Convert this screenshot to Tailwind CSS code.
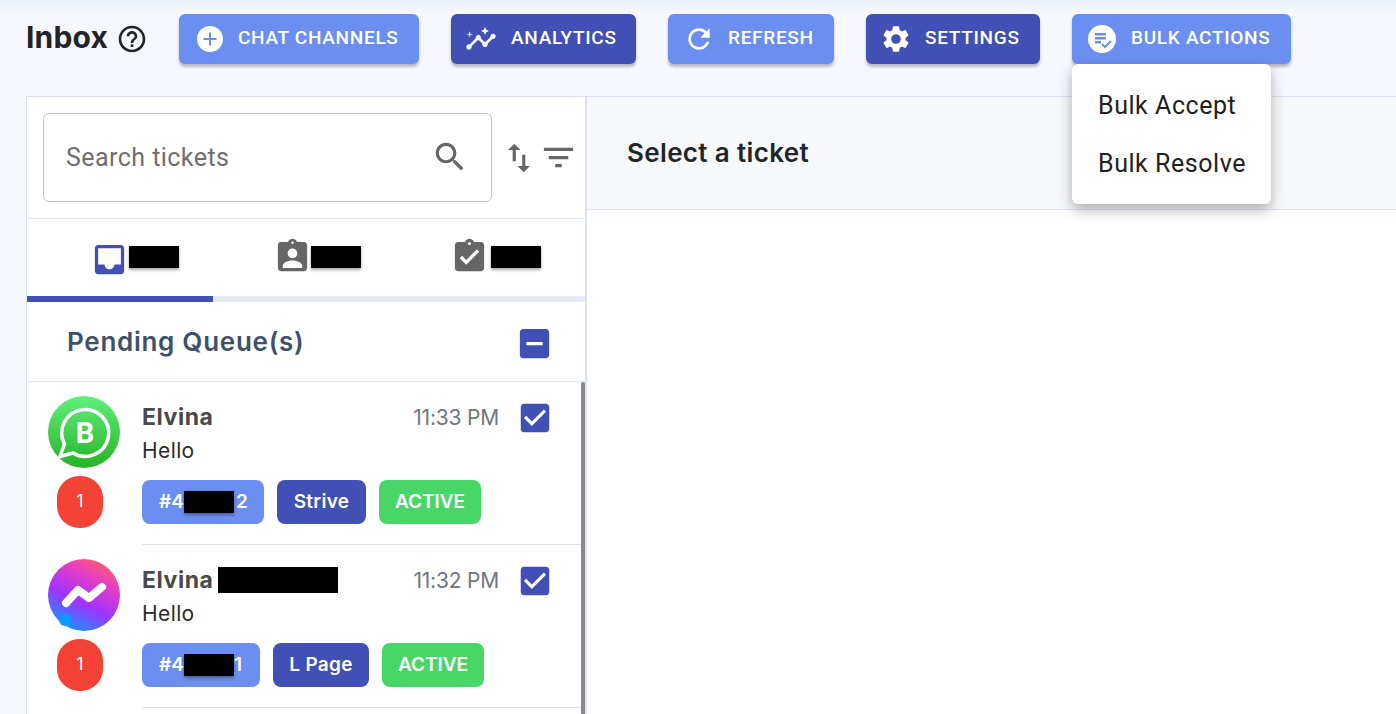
<!DOCTYPE html>
<html>
<head>
  <meta charset="utf-8">
  <title>Inbox</title>
  <script src="https://cdn.jsdelivr.net/npm/@tailwindcss/browser@4"></script>
</head>
<body class="bg-[#f6f8fe] h-[714px] overflow-hidden font-['Roboto',sans-serif]">

<!-- top bar -->
<header class="relative z-10 h-24 flex items-start pt-[14px] pl-[26px] bg-linear-to-b from-[#ebf1fd] to-[#f6f8fe] to-15%">
  <div class="w-[153px] h-[50px] flex items-center shrink-0">
    <h1 class="font-['Inter',sans-serif] font-bold text-[30px] text-[#212529] tracking-[0.2px] -mt-[3px]">Inbox</h1>
    <svg class="w-8 h-8 ml-[8px] -mt-[1px] text-[#212529]" viewBox="0 0 24 24" fill="currentColor"><path d="M11 18h2v-2h-2v2zm1-16C6.48 2 2 6.48 2 12s4.48 10 10 10 10-4.48 10-10S17.52 2 12 2zm0 18c-4.41 0-8-3.59-8-8s3.59-8 8-8 8 3.59 8 8-3.59 8-8 8zm0-14c-2.21 0-4 1.79-4 4h2c0-1.1.9-2 2-2s2 .9 2 2c0 2-3 1.75-3 5h2c0-2.25 3-2.5 3-5 0-2.21-1.79-4-4-4z"/></svg>
  </div>
  <div class="flex gap-8 text-white font-medium text-[19px] tracking-[0.7px]">
    <button class="w-[240px] h-[50px] pl-[18px] flex items-center gap-[15px] rounded-md bg-[#6b8ff0] shadow-[0_3px_3px_rgba(0,0,0,0.25)]">
      <svg class="w-[26px] h-[26px]" viewBox="0 0 26 26"><circle cx="13" cy="13" r="13" fill="#fff"/><path d="M13 6.500v13M6.500 13h13" stroke="#6b8ff0" stroke-width="2"/></svg>
      <span class="-mt-px">CHAT CHANNELS</span>
    </button>
    <button class="w-[185px] h-[50px] pl-[14px] flex items-center gap-[14px] rounded-md bg-[#4150b5] shadow-[0_3px_3px_rgba(0,0,0,0.25)]">
      <svg class="w-8 h-8" viewBox="0 0 24 24" fill="#fff"><path d="M21 8c-1.45 0-2.26 1.44-1.93 2.51l-3.55 3.56c-.3-.09-.74-.09-1.04 0l-2.55-2.55C12.27 10.45 11.46 9 10 9c-1.45 0-2.27 1.44-1.93 2.52l-4.56 4.55C2.44 15.74 1 16.55 1 18c0 1.1.9 2 2 2 1.45 0 2.26-1.44 1.93-2.51l4.55-4.56c.3.09.74.09 1.04 0l2.55 2.55C12.73 16.55 13.54 18 15 18c1.45 0 2.27-1.44 1.93-2.52l3.56-3.55c1.07.33 2.51-.48 2.51-1.93 0-1.1-.9-2-2-2z"/><path d="M15 9l.94-2.07L18 6l-2.06-.93L15 3l-.92 2.07L12 6l2.08.93zM3.500 11 4 9l2-.5L4 8l-.5-2L3 8l-2 .5L3 9z"/></svg>
      <span class="-mt-px">ANALYTICS</span>
    </button>
    <button class="w-[166px] h-[50px] pl-[15px] flex items-center gap-[13px] rounded-md bg-[#6b8ff0] shadow-[0_3px_3px_rgba(0,0,0,0.25)]">
      <svg class="w-8 h-8" viewBox="0 0 24 24" fill="#fff"><path d="M17.65 6.35C16.2 4.9 14.21 4 12 4c-4.42 0-7.99 3.58-7.99 8s3.57 8 7.99 8c3.73 0 6.84-2.55 7.73-6h-2.08c-.82 2.33-3.04 4-5.65 4-3.31 0-6-2.69-6-6s2.69-6 6-6c1.66 0 3.14.69 4.22 1.78L13 11h7V4l-2.35 2.35z"/></svg>
      <span class="-mt-px">REFRESH</span>
    </button>
    <button class="w-[174px] h-[50px] pl-[14px] flex items-center gap-[13px] rounded-md bg-[#4150b5] shadow-[0_3px_3px_rgba(0,0,0,0.25)]">
      <svg class="w-8 h-8" viewBox="0 0 24 24" fill="#fff"><path d="M19.14 12.94c.04-.3.06-.61.06-.94 0-.32-.02-.64-.07-.94l2.03-1.58c.18-.14.23-.41.12-.61l-1.92-3.32c-.12-.22-.37-.29-.59-.22l-2.39.96c-.5-.38-1.03-.7-1.62-.94l-.36-2.54c-.04-.24-.24-.41-.48-.41h-3.84c-.24 0-.43.17-.47.41l-.36 2.54c-.59.24-1.13.57-1.62.94l-2.39-.96c-.22-.08-.47 0-.59.22L2.74 8.87c-.12.21-.08.47.12.61l2.03 1.58c-.05.3-.09.63-.09.94s.02.64.07.94l-2.03 1.58c-.18.14-.23.41-.12.61l1.92 3.32c.12.22.37.29.59.22l2.39-.96c.5.38 1.03.7 1.62.94l.36 2.54c.05.24.24.41.48.41h3.84c.24 0 .44-.17.47-.41l.36-2.54c.59-.24 1.13-.56 1.62-.94l2.39.96c.22.08.47 0 .59-.22l1.92-3.32c.12-.22.07-.47-.12-.61l-2.01-1.58zM12 15.6c-1.98 0-3.6-1.62-3.6-3.6s1.62-3.6 3.6-3.6 3.6 1.62 3.6 3.6-1.62 3.6-3.6 3.6z"/></svg>
      <span class="-mt-px">SETTINGS</span>
    </button>
    <div class="relative">
      <button class="w-[219px] h-[50px] pl-[16px] flex items-center gap-[15px] rounded-md bg-[#6b8ff0] shadow-[0_3px_3px_rgba(0,0,0,0.25)]">
        <svg class="w-7 h-7" viewBox="0 0 28 28"><circle cx="14" cy="14" r="14" fill="#fff"/><path d="M7 8h11v2.400H7zM7 12h11v2.400H7zM7 16h6v2.400H7z" fill="#6b8ff0"/><path d="M14 19l3 3 6-6" fill="none" stroke="#6b8ff0" stroke-width="2"/></svg>
        <span class="-mt-px">BULK ACTIONS</span>
      </button>
      <!-- bulk actions menu -->
      <div class="absolute left-0 top-[50px] w-[199px] h-[140px] py-[13px] bg-white rounded-md shadow-[0_6px_14px_rgba(0,0,0,0.3)] text-[#212121] text-[25px] font-normal tracking-[0.55px]">
        <div class="h-[58px] pl-[26px] flex items-center">Bulk Accept</div>
        <div class="h-[58px] pl-[26px] flex items-center">Bulk Resolve</div>
      </div>
    </div>
  </div>
</header>

<main class="flex h-[618px] ml-[26px]">
  <!-- ticket list -->
  <section class="w-[561px] shrink-0 bg-white border-l border-t border-r-2 border-[#d9e3f2] flex flex-col">
    <div class="h-[122px] shrink-0 flex items-center pl-4 border-b border-[#dde5f0]">
      <div class="w-[449px] h-[89px] -mt-[1px] border border-[#c4c4c4] rounded-md flex items-center justify-between pl-[22px] pr-[22px] text-[25px] text-[#6e6e6e] tracking-[0.45px]">
        <span class="mt-[2px]">Search tickets</span>
        <svg class="w-[38px] h-[38px] text-[#666]" viewBox="0 0 24 24" fill="currentColor"><path d="M15.5 14h-.79l-.28-.27C15.41 12.59 16 11.11 16 9.5 16 5.91 13.09 3 9.5 3S3 5.91 3 9.5 5.91 16 9.5 16c1.61 0 3.09-.59 4.23-1.57l.27.28v.79l5 4.99L20.49 19l-4.99-5zm-6 0C7.01 14 5 11.99 5 9.5S7.01 5 9.5 5 14 7.01 14 9.5 11.99 14 9.5 14z"/></svg>
      </div>
      <svg class="w-[38px] h-[38px] ml-2 text-[#666]" viewBox="0 0 24 24" fill="currentColor"><path d="M16 17.01V10h-2v7.01h-3L15 21l4-3.99h-3zM9 3 5 6.99h3V14h2V6.99h3L9 3z"/></svg>
      <svg class="w-[39px] h-[39px] ml-px text-[#666]" viewBox="0 0 24 24" fill="currentColor"><path d="M10 18h4v-2h-4v2zM3 6v2h18V6H3zm3 7h12v-2H6v2z"/></svg>
    </div>

    <!-- tabs -->
    <div class="h-[83px] shrink-0 grid grid-cols-3 border-b-[6px] border-[#e6eaf5] relative">
      <div class="flex items-center gap-[5px] pl-[68px] -mt-[2px]">
        <svg class="w-[39px] h-[39px] -mx-[5px] mt-[5px] text-[#4150b5]" viewBox="0 0 24 24" fill="currentColor"><path d="M19 3H4.99c-1.11 0-1.98.89-1.98 2L3 19c0 1.1.88 2 1.99 2H19c1.1 0 2-.9 2-2V5c0-1.11-.9-2-2-2zm0 12h-4c0 1.66-1.35 3-3 3s-3-1.34-3-3H4.99V5H19v10z"/></svg>
        <span class="w-[50px] h-[22px] bg-black shadow-[0_2px_3px_rgba(0,0,0,0.35)]"></span>
      </div>
      <div class="flex items-center gap-[4px] pl-[65px] -mt-[2px]">
        <svg class="w-[39px] h-[39px] -mx-[5px] text-[#666]" viewBox="0 0 24 24" fill="currentColor"><path d="M19 3h-4.18C14.4 1.84 13.3 1 12 1c-1.3 0-2.4.84-2.82 2H5c-.14 0-.27.01-.4.04-.39.08-.74.28-1.01.55-.18.18-.33.4-.43.64-.1.23-.16.49-.16.77v14c0 .27.06.54.16.78s.25.45.43.64c.27.27.62.47 1.01.55.13.02.26.03.4.03h14c1.1 0 2-.9 2-2V5c0-1.1-.9-2-2-2zm-7-.25c.41 0 .75.34.75.75s-.34.75-.75.75-.75-.34-.75-.75.34-.75.75-.75zM12 7c1.66 0 3 1.34 3 3s-1.34 3-3 3-3-1.34-3-3 1.34-3 3-3zm6 12H6v-1.4c0-2 4-3.1 6-3.1s6 1.1 6 3.1V19z"/></svg>
        <span class="w-[50px] h-[22px] bg-black shadow-[0_2px_3px_rgba(0,0,0,0.35)]"></span>
      </div>
      <div class="flex items-center gap-[7px] pl-[56px] -mt-[2px]">
        <svg class="w-[39px] h-[39px] -mx-[5px] text-[#666]" viewBox="0 0 24 24" fill="currentColor"><path d="M19 3h-4.18C14.4 1.84 13.3 1 12 1c-1.3 0-2.4.84-2.82 2H5c-1.1 0-2 .9-2 2v14c0 1.1.9 2 2 2h14c1.1 0 2-.9 2-2V5c0-1.1-.9-2-2-2zm-7 0c.55 0 1 .45 1 1s-.45 1-1 1-1-.45-1-1 .45-1 1-1zm-2 14l-4-4 1.41-1.41L10 14.17l6.59-6.59L18 9l-8 8z"/></svg>
        <span class="w-[50px] h-[22px] bg-black shadow-[0_2px_3px_rgba(0,0,0,0.35)]"></span>
      </div>
      <span class="absolute left-0 -bottom-[6px] w-[186px] h-[6px] bg-[#4150b5]"></span>
    </div>

    <!-- queue heading -->
    <div class="h-[80px] shrink-0 flex items-center justify-between pl-[40px] pr-[31px] border-b border-[#dde5f0]">
      <h2 class="font-['Inter',sans-serif] font-semibold text-[26px] tracking-[0.72px] text-[#3f5069] -mt-px">Pending Queue(s)</h2>
      <svg class="w-[39px] h-[39px] mt-[3px] text-[#4150b5]" viewBox="0 0 24 24" fill="currentColor"><path d="M19 3H5c-1.1 0-2 .9-2 2v14c0 1.1.9 2 2 2h14c1.1 0 2-.9 2-2V5c0-1.1-.9-2-2-2zm-2 10H7v-2h10v2z"/></svg>
    </div>

    <!-- tickets -->
    <div class="relative flex-1 overflow-hidden font-['Inter',sans-serif]">
      <span class="absolute right-0 top-0 bottom-0 w-1 bg-[#8a8a8a] rounded-t-sm"></span>

      <article class="h-[163px] flex pl-[21px] pr-1">
        <div class="w-[72px] shrink-0 mr-[22px] pt-[14px] flex flex-col items-center">
          <svg class="w-[72px] h-[72px]" viewBox="0 0 72 72">
            <defs><linearGradient id="wa" x1="0" y1="0" x2="0" y2="1"><stop offset="0" stop-color="#60f07a"/><stop offset="1" stop-color="#28b22a"/></linearGradient></defs>
            <circle cx="36" cy="36" r="36" fill="url(#wa)"/>
            <path d="M12 60.500l4.500-12.500A23.500 23.500 0 1 1 25 57z" fill="none" stroke="#fff" stroke-width="3.500" stroke-linejoin="round"/>
            <text x="37" y="46.500" text-anchor="middle" font-family="Roboto" font-weight="700" font-size="29" fill="#fff">B</text>
          </svg>
          <span class="mt-2 -ml-[8px] w-[46px] h-[52px] rounded-[22px] bg-[#f44336] text-white text-[17px] flex items-center justify-center">1</span>
        </div>
        <div class="flex-1 border-b border-[#e2e2e2] relative">
          <div class="flex items-center justify-between h-[30px] mt-[20px]">
            <strong class="font-bold text-[23px] tracking-[0.55px] text-[#4a4a4a]">Elvina</strong>
            <time class="text-[21px] tracking-[-0.2px] text-[#6f7680] mr-[82px] translate-y-px">11:33 PM</time>
          </div>
          <p class="text-[21px] tracking-[0.4px] text-[#2b2b2b] leading-[30px] mt-[4px]">Hello</p>
          <div class="flex gap-[13px] mt-[15px] -translate-y-px text-white font-semibold text-[19px]">
            <span class="h-11 w-[122px] pl-[17px] rounded-lg bg-[#6b8ff0] flex items-center">#4<i class="w-[50px] h-[22px] bg-black shadow-[0_2px_3px_rgba(0,0,0,0.35)]"></i><span class="ml-[2px]">2</span></span>
            <span class="h-11 w-[89px] rounded-lg bg-[#4150b5] flex items-center justify-center tracking-[0.3px]">Strive</span>
            <span class="h-11 w-[102px] rounded-lg bg-[#48d668] flex items-center justify-center">ACTIVE</span>
          </div>
          <svg class="absolute right-[27px] top-[17px] w-[38px] h-[38px] text-[#4150b5]" viewBox="0 0 24 24" fill="currentColor"><path d="M19 3H5c-1.11 0-2 .9-2 2v14c0 1.1.89 2 2 2h14c1.11 0 2-.9 2-2V5c0-1.1-.89-2-2-2zm-9 14l-5-5 1.41-1.41L10 14.17l7.59-7.59L19 8l-9 9z"/></svg>
        </div>
      </article>

      <article class="h-[163px] flex pl-[21px] pr-1">
        <div class="w-[72px] shrink-0 mr-[22px] pt-[14px] flex flex-col items-center">
          <svg class="w-[72px] h-[72px]" viewBox="0 0 72 72">
            <defs><linearGradient id="ms" x1="0.25" y1="1" x2="0.75" y2="0"><stop offset="0" stop-color="#0a9bff"/><stop offset="0.4" stop-color="#a033ff"/><stop offset="0.75" stop-color="#e83ec0"/><stop offset="1" stop-color="#ff6068"/></linearGradient></defs>
            <circle cx="36" cy="36" r="36" fill="url(#ms)"/>
            <circle cx="17" cy="61" r="6" fill="#0a9bff"/>
            <path d="M18 44L30 31l11 8L54 28" fill="none" stroke="#fff" stroke-width="8" stroke-linecap="round" stroke-linejoin="round"/>
          </svg>
          <span class="mt-2 -ml-[8px] w-[46px] h-[52px] rounded-[22px] bg-[#f44336] text-white text-[17px] flex items-center justify-center">1</span>
        </div>
        <div class="flex-1 border-b border-[#e2e2e2] relative">
          <div class="flex items-center justify-between h-[30px] mt-[20px]">
            <div class="flex items-center">
              <strong class="font-bold text-[23px] tracking-[0.55px] text-[#4a4a4a]">Elvina</strong>
              <i class="ml-[5px] w-[120px] h-[26px] bg-black"></i>
            </div>
            <time class="text-[21px] tracking-[-0.2px] text-[#6f7680] mr-[82px] translate-y-px">11:32 PM</time>
          </div>
          <p class="text-[21px] tracking-[0.4px] text-[#2b2b2b] leading-[30px] mt-[4px]">Hello</p>
          <div class="flex gap-[13px] mt-[15px] -translate-y-px text-white font-semibold text-[19px]">
            <span class="h-11 w-[118px] pl-[17px] rounded-lg bg-[#6b8ff0] flex items-center">#4<i class="w-[50px] h-[22px] bg-black shadow-[0_2px_3px_rgba(0,0,0,0.35)]"></i><span>1</span></span>
            <span class="h-11 w-[96px] rounded-lg bg-[#4150b5] flex items-center justify-center tracking-[0.3px]">L Page</span>
            <span class="h-11 w-[102px] rounded-lg bg-[#48d668] flex items-center justify-center">ACTIVE</span>
          </div>
          <svg class="absolute right-[27px] top-[17px] w-[38px] h-[38px] text-[#4150b5]" viewBox="0 0 24 24" fill="currentColor"><path d="M19 3H5c-1.11 0-2 .9-2 2v14c0 1.1.89 2 2 2h14c1.11 0 2-.9 2-2V5c0-1.1-.89-2-2-2zm-9 14l-5-5 1.41-1.41L10 14.17l7.59-7.59L19 8l-9 9z"/></svg>
        </div>
      </article>
    </div>
  </section>

  <!-- ticket detail -->
  <section class="flex-1 flex flex-col bg-white">
    <div class="h-[114px] shrink-0 pl-[40px] flex items-center bg-[#f7f8fa] border-t border-b border-[#d9e3f2]">
      <h2 class="font-['Inter',sans-serif] font-semibold text-[26px] tracking-[0.35px] text-[#212529] -mt-[1px]">Select a ticket</h2>
    </div>
  </section>
</main>

</body>
</html>
